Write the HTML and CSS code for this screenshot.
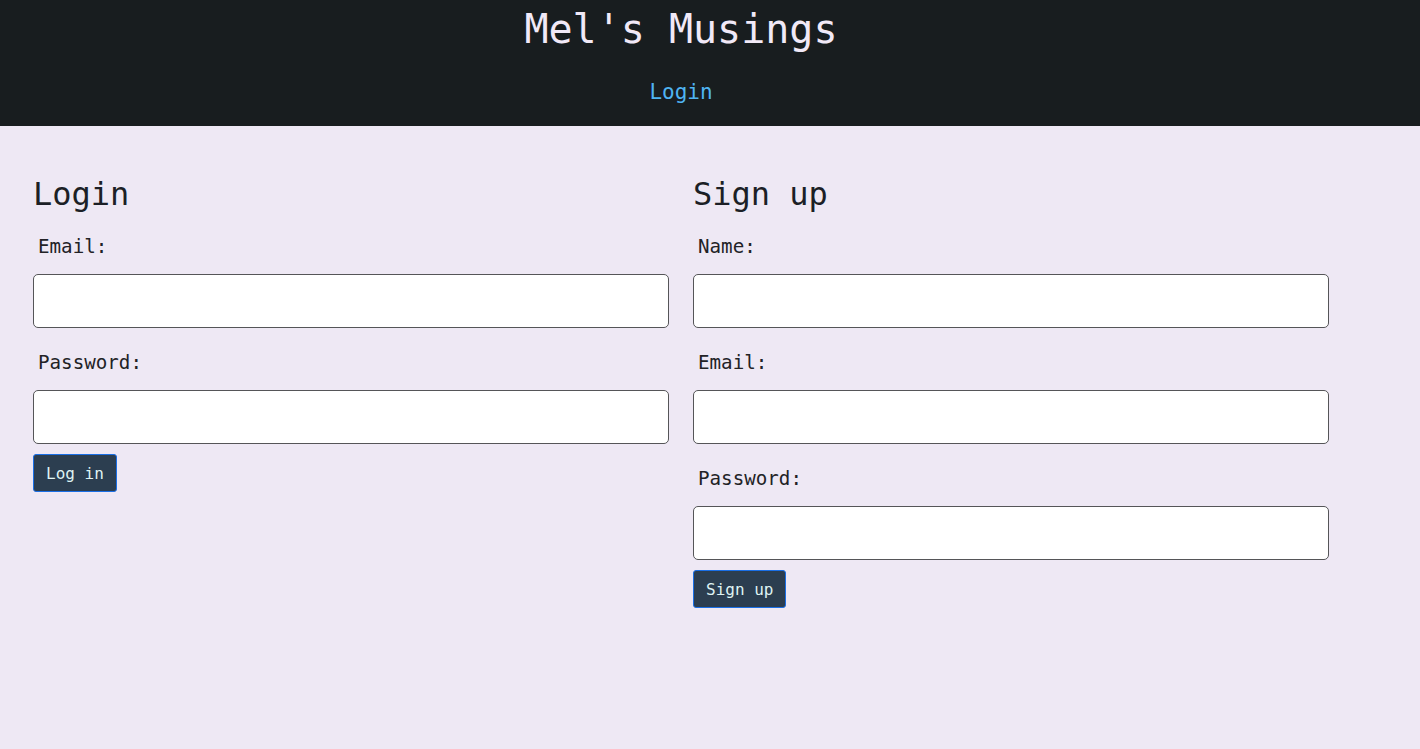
FILE: index.html
```html
<!DOCTYPE html>
<html lang="en">
<head>
<meta charset="utf-8">
<title>Mel's Musings</title>
<link rel="stylesheet" href="styles.css">
</head>
<body>
<header class="site-header">
  <div class="header-inner">
    <h1 class="site-title">Mel's Musings</h1>
    <nav class="site-nav"><a href="#" class="nav-link">Login</a></nav>
  </div>
</header>
<main class="main">
  <section class="panel">
    <h2 class="panel-title">Login</h2>
    <form class="form">
      <label class="field-label" for="login-email">Email:</label>
      <input class="field-input" id="login-email" type="email">
      <label class="field-label" for="login-password">Password:</label>
      <input class="field-input" id="login-password" type="password">
      <div class="actions"><button class="btn" type="button">Log in</button></div>
    </form>
  </section>
  <section class="panel">
    <h2 class="panel-title">Sign up</h2>
    <form class="form">
      <label class="field-label" for="signup-name">Name:</label>
      <input class="field-input" id="signup-name" type="text">
      <label class="field-label" for="signup-email">Email:</label>
      <input class="field-input" id="signup-email" type="email">
      <label class="field-label" for="signup-password">Password:</label>
      <input class="field-input" id="signup-password" type="password">
      <div class="actions"><button class="btn" type="button">Sign up</button></div>
    </form>
  </section>
</main>
</body>
</html>
```
FILE: styles.css
```css
* { box-sizing: border-box; }
html, body {
  margin: 0;
  padding: 0;
  min-height: 100%;
}
body {
  background: #eee8f4;
  font-family: "DejaVu Sans Mono", "Liberation Mono", monospace;
  color: #1c1f26;
  min-height: 749px;
}
.site-header {
  background: #181d1f;
  height: 126px;
}
.header-inner {
  width: 1362px;
  display: flex;
  flex-direction: column;
  align-items: center;
  padding-top: 5px;
}
.site-title {
  margin: 0;
  font-size: 40px;
  line-height: 48px;
  font-weight: normal;
  color: #f1e9f7;
}
.site-nav {
  margin-top: 27px;
}
.nav-link {
  display: block;
  font-size: 21px;
  line-height: 25px;
  color: #4fb4f2;
  text-decoration: none;
}
.main {
  width: 1362px;
  padding: 49px 33px 0;
  display: grid;
  grid-template-columns: 636px 636px;
  column-gap: 24px;
}
.panel-title {
  margin: 0;
  font-size: 32px;
  line-height: 38px;
  font-weight: normal;
  color: #1c1f26;
}
.form {
  display: flex;
  flex-direction: column;
}
.field-label {
  display: block;
  font-size: 19.2px;
  line-height: 23px;
  padding-left: 5px;
  margin: 22.5px 0 16.5px;
  color: #222226;
}
.panel-title + .form .field-label:first-child {
  margin-top: 21.5px;
}
.field-input {
  display: block;
  width: 636px;
  height: 54px;
  margin: 0;
  border: 1px solid #555558;
  border-radius: 5px;
  background: #ffffff;
  font: inherit;
}
.actions {
  margin-top: 10px;
}
.btn {
  height: 38px;
  padding: 0 12px;
  font-family: "DejaVu Sans Mono", "Liberation Mono", monospace;
  font-size: 16px;
  color: #dff3f3;
  background: #2c3e50;
  border: 1px solid #1a6fe6;
  border-radius: 3px;
  cursor: pointer;
}
```
